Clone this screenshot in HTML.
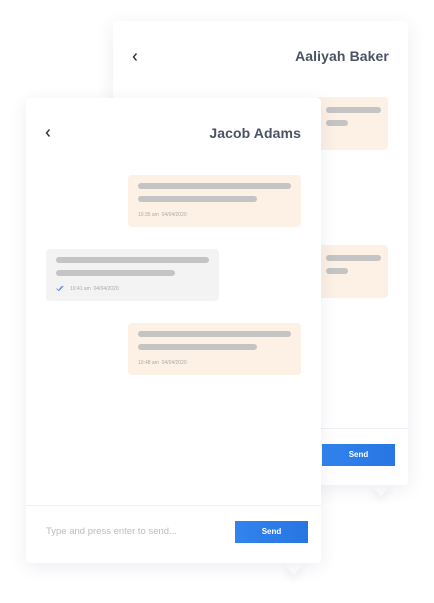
<!DOCTYPE html><html><head><style>
body{margin:0;width:434px;height:603px;background:#fff;position:relative;overflow:hidden;font-family:"Liberation Sans",sans-serif}
.card{position:absolute;background:#fff;border-radius:4px;box-shadow:0 4px 18px rgba(40,60,100,.09)}
.tail{position:absolute;width:14px;height:14px;background:#fff;transform:rotate(45deg);box-shadow:4px 4px 8px rgba(40,60,100,.06)}
.title{position:absolute;font-weight:bold;font-size:14px;color:#4a5264;letter-spacing:.1px}
.back{position:absolute;width:8px;height:10px}
.b{position:absolute;border-radius:4px}
.o{background:#fdf0e5}.g{background:#f3f3f3}
.l{position:absolute;height:6px;border-radius:3px;background:#c4c4c4}
.t{position:absolute;font-size:5px;color:#aaa}
.div{position:absolute;left:0;right:0;height:1px;background:#eef0f3}
.send{position:absolute;background:linear-gradient(90deg,#3283ee,#2776e3);color:#fff;font-size:8px;font-weight:bold;text-align:center;line-height:22px}
</style></head><body>
<div class="tail" style="left:374px;top:479px"></div>
<div class="card" style="left:113px;top:21px;width:295px;height:464px">
 <svg class="back" style="left:18px;top:31px" viewBox="0 0 8 10"><path d="M5.5 1.5 2.5 5l3 3.5" fill="none" stroke="#333" stroke-width="1.4"/></svg>
 <div class="title" style="right:19px;top:27px">Aaliyah Baker</div>
 <div class="b o" style="left:203px;top:76px;width:72px;height:53px"><div class="l" style="left:10px;top:10px;width:55px"></div><div class="l" style="left:10px;top:23px;width:22px"></div></div>
 <div class="b o" style="left:203px;top:224px;width:72px;height:53px"><div class="l" style="left:10px;top:10px;width:55px"></div><div class="l" style="left:10px;top:23px;width:22px"></div></div>
 <div class="div" style="top:407px"></div>
 <div class="send" style="left:209px;top:423px;width:73px;height:22px">Send</div>
</div>
<div class="tail" style="left:287px;top:558px"></div>
<div class="card" style="left:26px;top:98px;width:295px;height:465px">
 <svg class="back" style="left:18px;top:30px" viewBox="0 0 8 10"><path d="M5.5 1.5 2.5 5l3 3.5" fill="none" stroke="#333" stroke-width="1.4"/></svg>
 <div class="title" style="right:20px;top:27px">Jacob Adams</div>
 <div class="b o" style="left:102px;top:77px;width:173px;height:52px"><div class="l" style="left:10px;top:8px;width:153px"></div><div class="l" style="left:10px;top:21px;width:119px"></div><div class="t" style="left:10px;top:37px">10:35 am &nbsp;04/04/2020</div></div>
 <div class="b g" style="left:20px;top:151px;width:173px;height:52px"><div class="l" style="left:10px;top:8px;width:153px"></div><div class="l" style="left:10px;top:21px;width:119px"></div>
  <svg style="position:absolute;left:10px;top:36px" width="8" height="7" viewBox="0 0 8 7"><path d="M0.5 3.5 2.5 5.5 6 1M3 5.5 7.5 1" fill="none" stroke="#5b8de8" stroke-width="0.8"/></svg>
  <div class="t" style="left:24px;top:37px">10:41 am &nbsp;04/04/2020</div></div>
 <div class="b o" style="left:102px;top:225px;width:173px;height:52px"><div class="l" style="left:10px;top:8px;width:153px"></div><div class="l" style="left:10px;top:21px;width:119px"></div><div class="t" style="left:10px;top:37px">10:48 am &nbsp;04/04/2020</div></div>
 <div class="div" style="top:407px"></div>
 <div style="position:absolute;left:20px;top:428px;font-size:9.5px;color:#bbb">Type and press enter to send...</div>
 <div class="send" style="left:209px;top:423px;width:73px;height:22px">Send</div>
</div>
</body></html>
